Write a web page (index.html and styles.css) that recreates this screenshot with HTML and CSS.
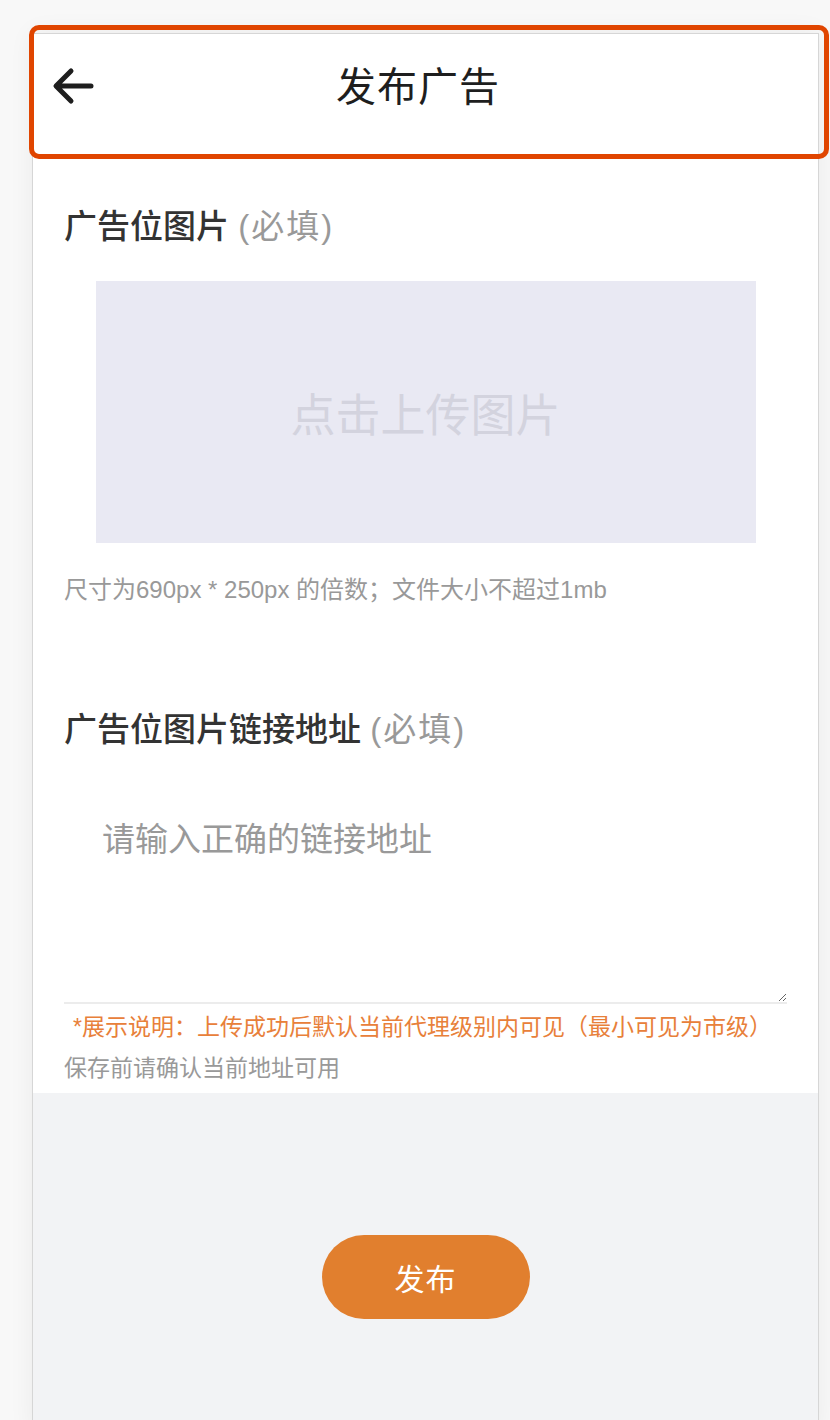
FILE: index.html
```html
<!DOCTYPE html>
<html lang="zh-CN">
<head>
<meta charset="utf-8">
<title>发布广告</title>
<link rel="stylesheet" href="styles.css">
</head>
<body>
<div class="frame">
  <header class="topbar">
    <span class="back" aria-label="返回">
      <svg width="44" height="44" viewBox="0 0 44 44"><path d="M40 22H6M20 7 5 22l15 15" fill="none" stroke="#1e1e1e" stroke-width="5" stroke-linecap="round" stroke-linejoin="round"/></svg>
    </span>
    <h1 class="title">发布广告</h1>
    <span></span>
  </header>
  <main class="content">
    <h2 class="label label-first">广告位图片 <span class="req">(必填)</span></h2>
    <div class="upload">点击上传图片</div>
    <p class="hint">尺寸为690px * 250px 的倍数；文件大小不超过1mb</p>
    <h2 class="label label-second">广告位图片链接地址 <span class="req">(必填)</span></h2>
    <textarea class="link-input" placeholder="请输入正确的链接地址"></textarea>
    <p class="notice">*展示说明：上传成功后默认当前代理级别内可见（最小可见为市级）</p>
    <p class="hint hint-tight">保存前请确认当前地址可用</p>
  </main>
  <div class="actions">
    <button class="publish" type="button">发布</button>
  </div>
</div>
<div class="highlight"></div>
</body>
</html>
```

FILE: styles.css
```css
html, body {
  margin: 0;
  padding: 0;
}
body {
  background: #f8f8f8;
  font-family: "Liberation Sans", "Noto Sans CJK SC", sans-serif;
  color: #333;
  position: relative;
  height: 1420px;
  overflow: hidden;
}
.frame {
  margin: 33px 0 0 32px;
  width: 787px;
  box-sizing: border-box;
  min-height: 1400px;
  border: 1px solid #d6d6d6;
  border-bottom: none;
  background: #f2f3f5;
  box-shadow: 0 0 24px rgba(0, 0, 0, 0.06);
}
.topbar {
  height: 106px;
  background: #fff;
  display: grid;
  grid-template-columns: 1fr auto 1fr;
  align-items: center;
  padding-right: 15px;
}
.back {
  margin-left: 18px;
  display: flex;
  align-items: center;
  margin-top: -2px;
}
.title {
  margin: -6px 0 0;
  font-size: 40px;
  font-weight: 400;
  color: #1e1e1e;
  letter-spacing: 1px;
}
.content {
  background: #fff;
  padding: 0 31px 9px;
  display: flex;
  flex-direction: column;
}
.label {
  margin: 0;
  font-size: 33px;
  line-height: 44px;
  font-weight: 500;
  color: #333;
}
.label-first { margin-top: 65px; }
.label-second { margin-top: 102px; }
.req {
  color: #999;
  font-weight: 400;
  letter-spacing: 2px;
}
.upload {
  margin: 32px auto 0;
  width: 660px;
  height: 262px;
  background: #e9e9f3;
  color: #d3d3de;
  font-size: 45px;
  display: flex;
  align-items: center;
  justify-content: center;
}
.hint {
  margin: 31px 0 0;
  font-size: 24px;
  line-height: 32px;
  color: #999;
}
.link-input {
  margin-top: 48px;
  width: 100%;
  height: 204px;
  box-sizing: border-box;
  border: none;
  border-bottom: 2px solid #ececec;
  padding: 20px 38px;
  font-family: "Liberation Sans", "Noto Sans CJK SC", sans-serif;
  font-size: 33px;
  line-height: 40px;
  color: #333;
  outline: none;
  resize: vertical;
  background: #fff;
}
.link-input::placeholder {
  color: #999;
}
.notice {
  margin: 7px 0 0;
  padding-left: 9px;
  font-size: 23px;
  line-height: 32px;
  color: #e8803a;
}
.hint-tight {
  margin-top: 9px;
  font-size: 23px;
}
.actions {
  display: flex;
  justify-content: center;
  padding-top: 142px;
}
.publish {
  width: 208px;
  height: 84px;
  border: none;
  border-radius: 42px;
  background: #e17f2e;
  color: #fff;
  font-family: "Liberation Sans", "Noto Sans CJK SC", sans-serif;
  font-size: 30px;
  letter-spacing: 1px;
  cursor: pointer;
}
.highlight {
  position: absolute;
  left: 29px;
  top: 25px;
  width: 800px;
  height: 134px;
  box-sizing: border-box;
  border: 5px solid #e04500;
  border-radius: 10px;
  pointer-events: none;
}
```
